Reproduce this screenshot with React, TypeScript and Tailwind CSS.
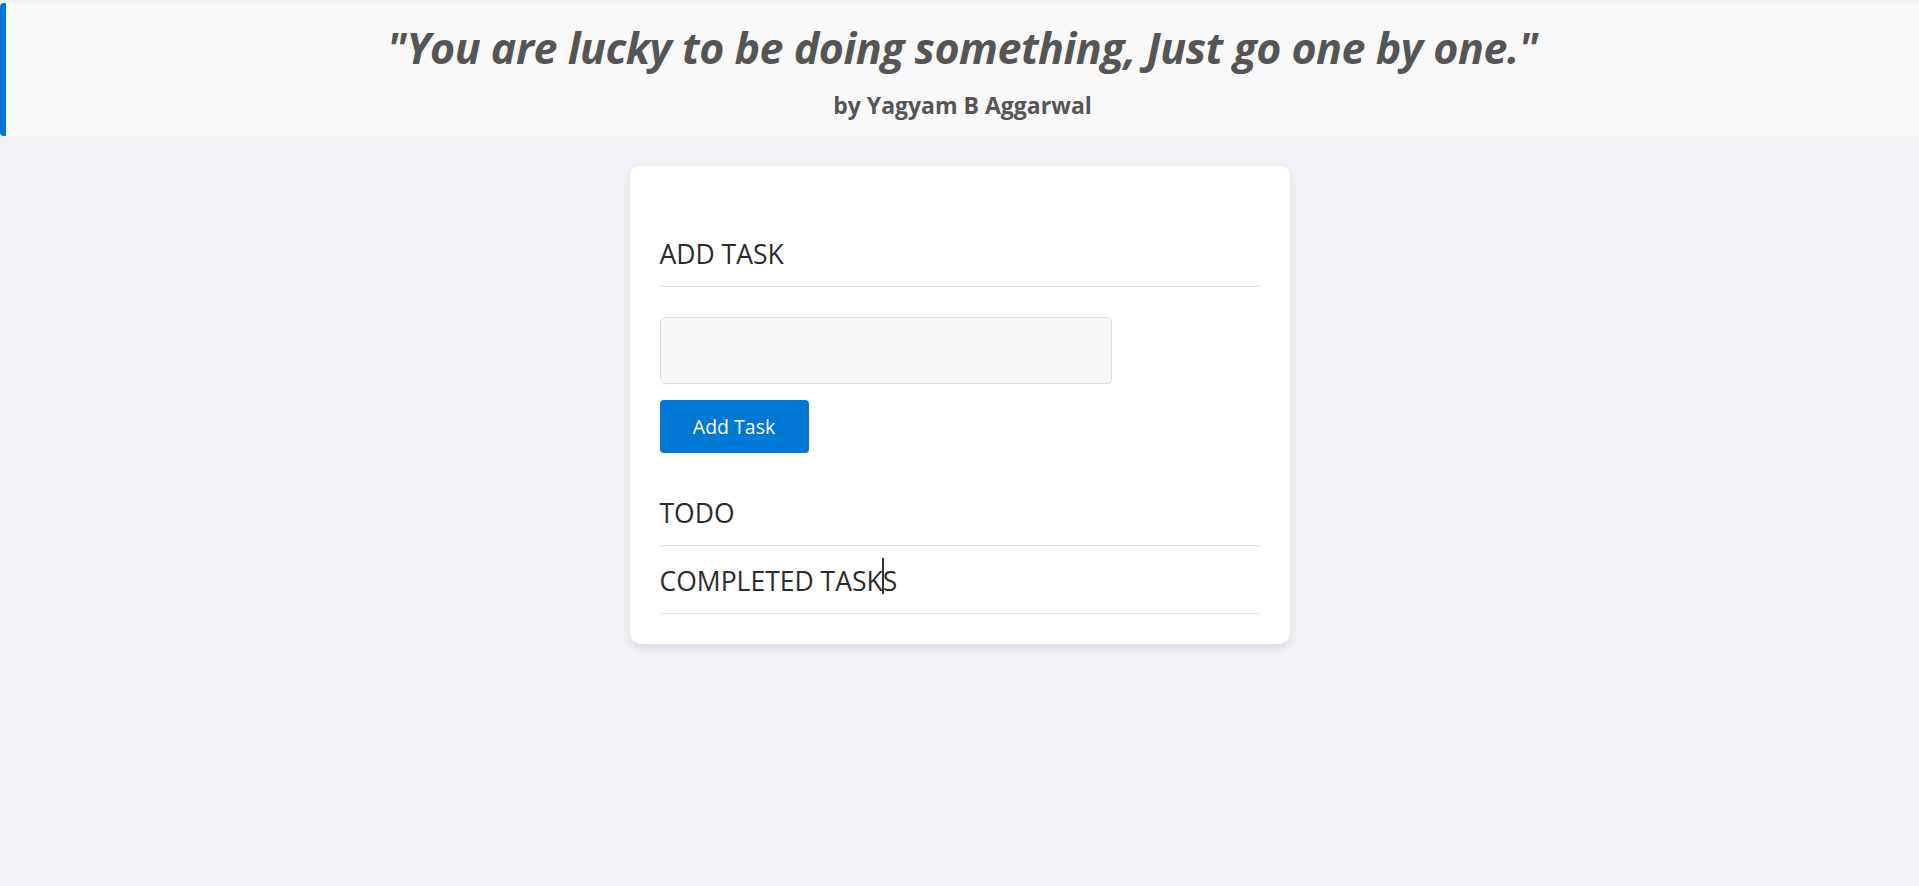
import React from "react";

export default function App() {
  return (
    <div className="min-h-[886px] bg-[#f3f3f7] pt-[3px] font-['Open_Sans',sans-serif]">
      <header className="h-[133px] bg-[#f9f9f9] border-l-[6px] border-[#0078d4] rounded-[4px] flex flex-col items-center text-[#555]">
        <p className="mt-[19px] text-[43px] leading-[52px] font-bold italic tracking-[-0.5px]">
          "You are lucky to be doing something, Just go one by one."
        </p>
        <p className="mt-[16px] text-[23px] leading-[30px] font-bold">by Yagyam B Aggarwal</p>
      </header>

      <main className="mx-auto mt-[30px] w-[660px] bg-white rounded-[10px] shadow-[0_4px_10px_rgba(0,0,0,0.1)] px-[30px] pt-[72px] pb-[30px] text-[#2b2b2b]">
        <h2 className="text-[26.5px] leading-[32px] pb-[16px] border-b border-[#dddddd]">ADD TASK</h2>
        <div className="mt-[30px] flex flex-col items-start gap-[16px]">
          <input
            type="text"
            className="w-[452px] h-[67px] rounded-[5px] border border-[#dddddd] bg-[#f8f8f8] px-3 outline-none"
          />
          <button className="w-[149px] h-[53px] rounded-[4px] bg-[#0078d4] text-white text-[19.5px]">
            Add Task
          </button>
        </div>
        <h2 className="mt-[25px] pt-[19px] text-[26.5px] leading-[32px] pb-[16px] border-b border-[#dddddd]">TODO</h2>
        <h2 className="pt-[19px] text-[26.5px] leading-[32px] pb-[16px] border-b border-[#dddddd]">
          COMPLETED TASK
          <span className="relative">
            <span className="absolute left-[-1px] top-[-5px] h-[36px] w-[2px] bg-[#333]" />
            S
          </span>
        </h2>
      </main>
    </div>
  );
}
